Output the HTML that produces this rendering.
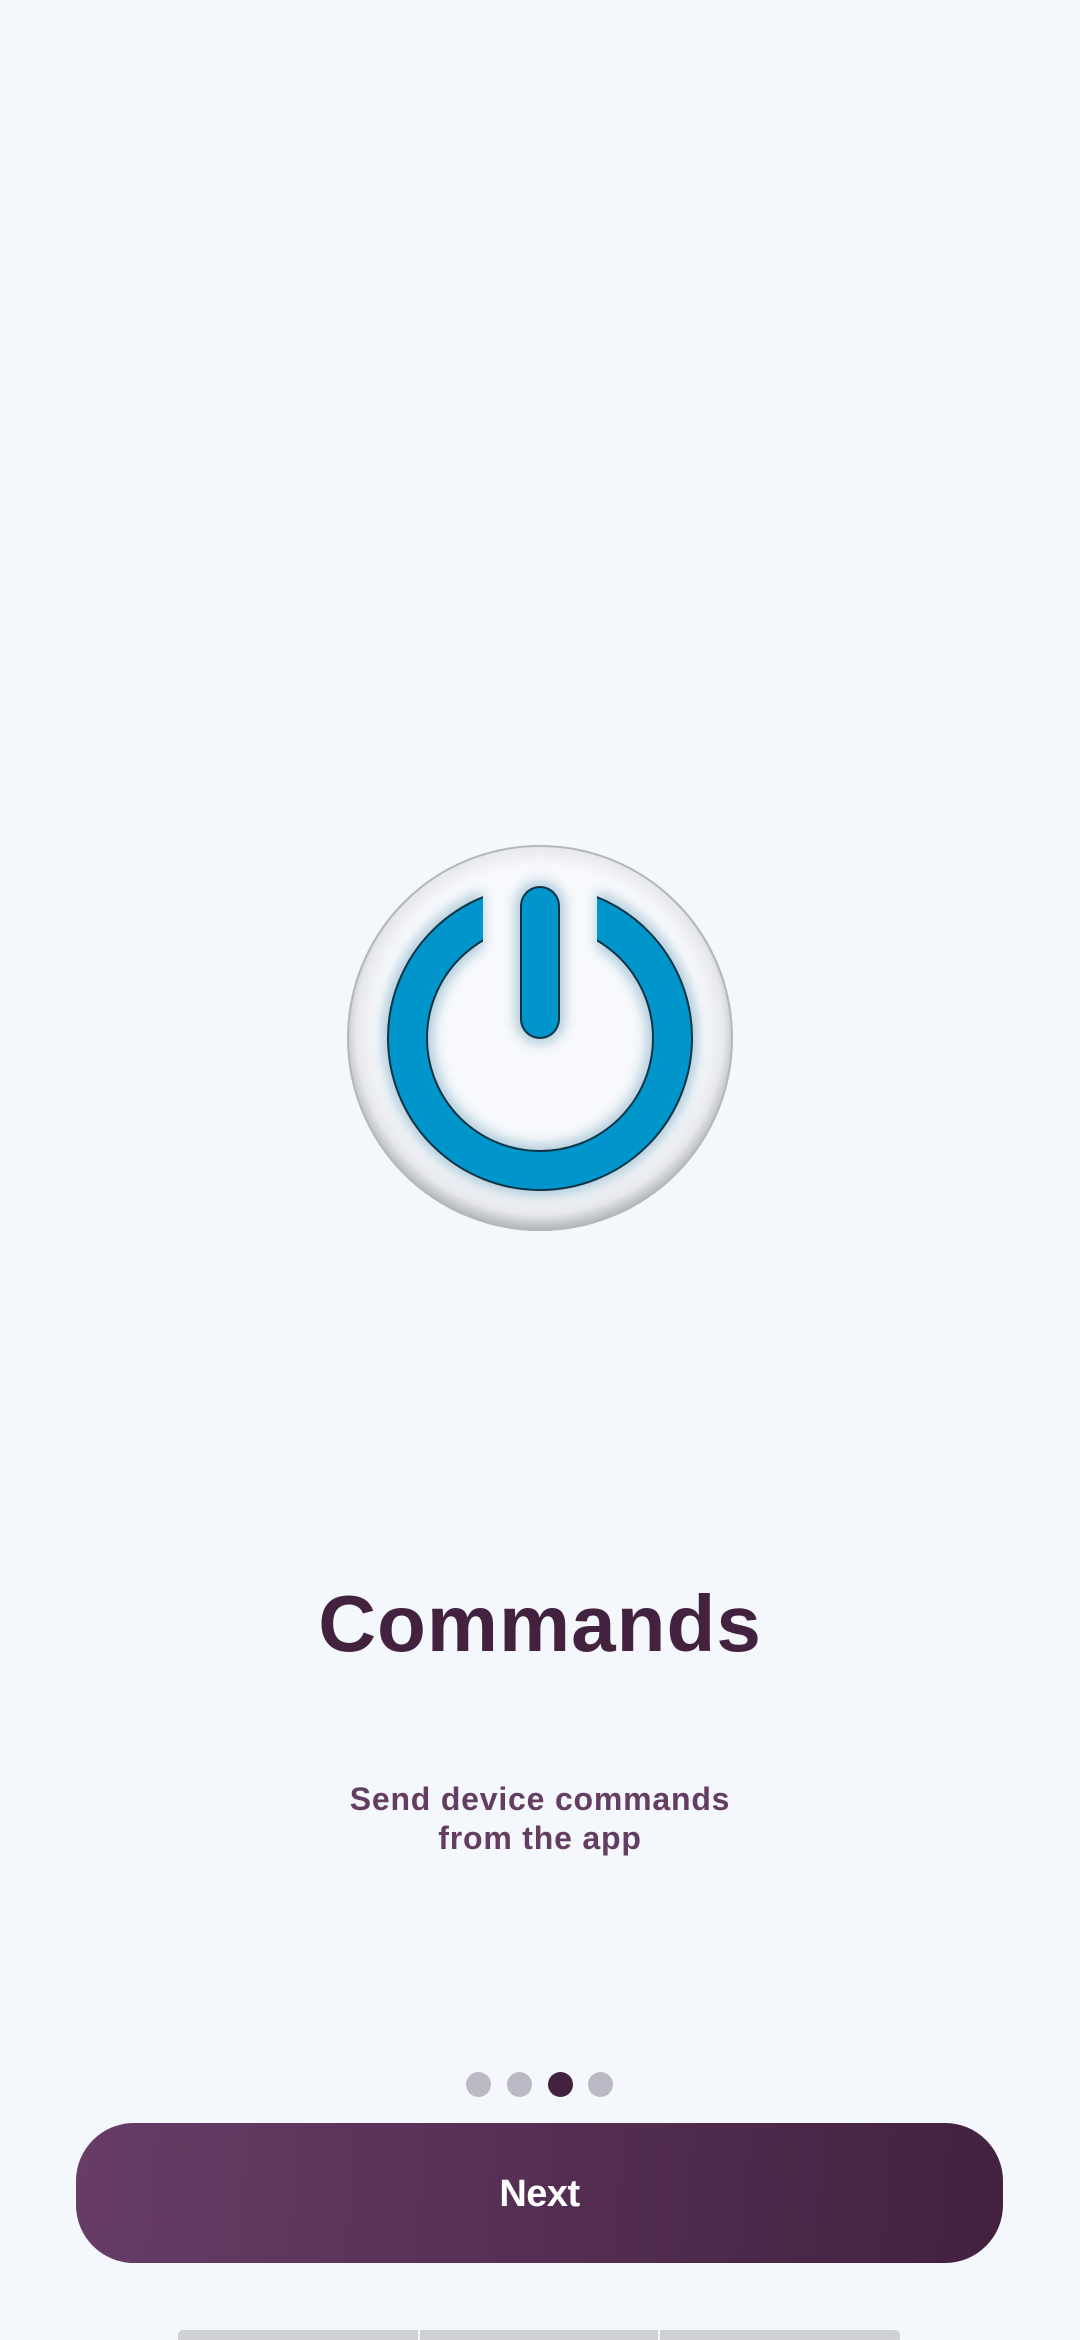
<!DOCTYPE html>
<html><head><meta charset="utf-8"><style>
html,body{margin:0;padding:0;width:1080px;height:2340px;background:#f4f7fc;overflow:hidden;font-family:"Liberation Sans",sans-serif;position:relative}
.title{position:absolute;left:0;width:1080px;top:1578px;text-align:center;font-size:80px;font-weight:bold;color:#42223f;letter-spacing:1px;line-height:92px}
.sub{position:absolute;left:0;width:1080px;top:1780px;text-align:center;font-size:32px;font-weight:bold;color:#643e62;line-height:39px;letter-spacing:0.8px}
.dot{position:absolute;top:2072px;width:25px;height:25px;border-radius:50%;background:#bcb8c5}
.btn{position:absolute;left:76px;top:2123px;width:927px;height:140px;border-radius:58px;background:linear-gradient(95deg,#673d67,#42213f);color:#fff;font-weight:bold;font-size:38px;text-align:center;line-height:142px;letter-spacing:-0.5px}
.bar{position:absolute;top:2330px;height:10px;background:#d0d1d6}
</style></head><body>
<svg style="position:absolute;left:0;top:0" width="1080" height="1300">
<defs>
<radialGradient id="disc" cx="0.5" cy="0.48" r="0.53">
<stop offset="0.8" stop-color="#f7f9fc"/><stop offset="0.9" stop-color="#e6e8ec"/><stop offset="1" stop-color="#a0a3a8"/>
</radialGradient>
<filter id="glow" x="-20%" y="-20%" width="140%" height="140%"><feGaussianBlur stdDeviation="6"/></filter>
<mask id="m"><rect width="1080" height="1300" fill="#fff"/><rect x="483" y="850" width="114" height="100" fill="#000"/></mask>
</defs>
<circle cx="540" cy="1038" r="193" fill="url(#disc)"/>
<circle cx="540" cy="1038" r="192" fill="none" stroke="#b4b7bc" stroke-width="2"/>
<g filter="url(#glow)" opacity="0.5">
<circle cx="540" cy="1038" r="132.5" fill="none" stroke="#6a9fb8" stroke-width="52" mask="url(#m)"/>
<line x1="540" y1="906" x2="540" y2="1019" stroke="#6a9fb8" stroke-width="50" stroke-linecap="round"/>
</g>
<circle cx="540" cy="1038" r="132.5" fill="none" stroke="#0b3346" stroke-width="41" mask="url(#m)"/>
<circle cx="540" cy="1038" r="132.5" fill="none" stroke="#0096cc" stroke-width="37" mask="url(#m)"/>
<line x1="540" y1="906" x2="540" y2="1019" stroke="#0b3346" stroke-width="40" stroke-linecap="round"/>
<line x1="540" y1="906" x2="540" y2="1019" stroke="#0096cc" stroke-width="36" stroke-linecap="round"/>
</svg>
<div class="title">Commands</div>
<div class="sub">Send device commands<br>from the app</div>
<div class="dot" style="left:466px"></div>
<div class="dot" style="left:507px"></div>
<div class="dot" style="left:548px;background:#42223f"></div>
<div class="dot" style="left:588px"></div>
<div class="btn">Next</div>
<div class="bar" style="left:178px;width:240px;border-radius:5px 0 0 0"></div>
<div class="bar" style="left:420px;width:238px"></div>
<div class="bar" style="left:660px;width:240px;border-radius:0 5px 0 0"></div>
</body></html>
